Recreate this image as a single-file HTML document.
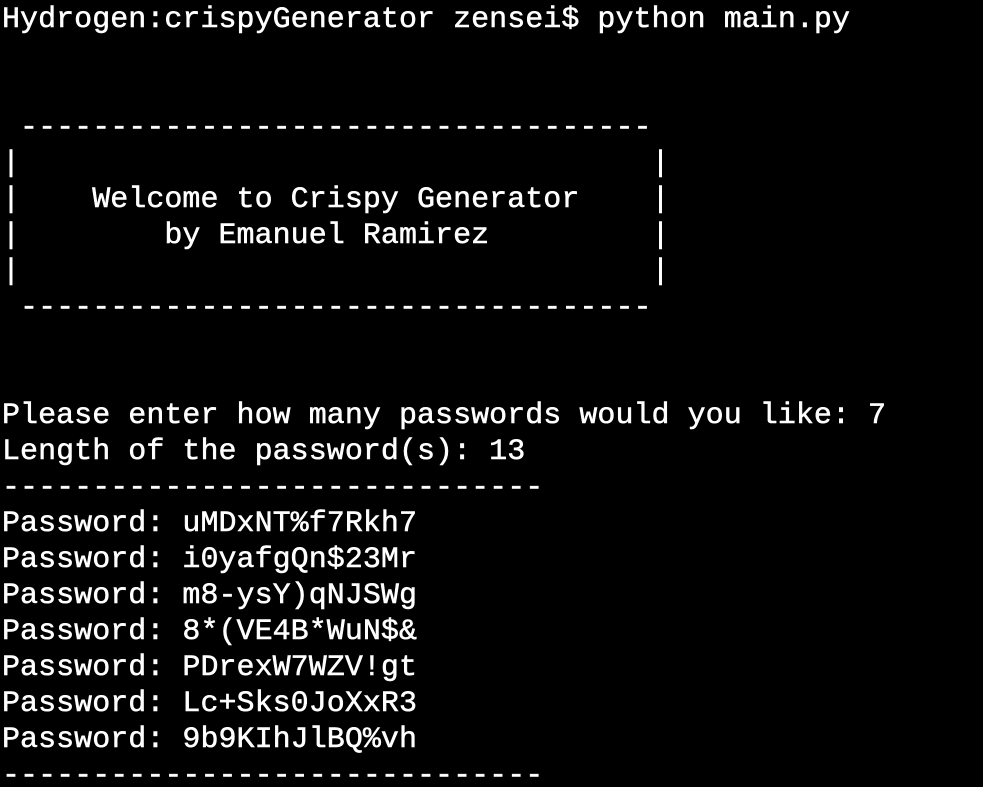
<!DOCTYPE html>
<html><head><meta charset="utf-8"><style>
html,body{margin:0;padding:0;background:#000;width:983px;height:787px;overflow:hidden}
pre{margin:0;padding:2px 0 0 2px;font-family:"Liberation Mono",monospace;font-size:30px;line-height:36px;color:#fff;letter-spacing:0.04px;-webkit-text-stroke:0.5px #fff}
</style></head><body><pre>Hydrogen:crispyGenerator zensei$ python main.py


 -----------------------------------
|                                   |
|    Welcome to Crispy Generator    |
|        by Emanuel Ramirez         |
|                                   |
 -----------------------------------


Please enter how many passwords would you like: 7
Length of the password(s): 13
------------------------------
Password: uMDxNT%f7Rkh7
Password: i0yafgQn$23Mr
Password: m8-ysY)qNJSWg
Password: 8*(VE4B*WuN$&amp;
Password: PDrexW7WZV!gt
Password: Lc+Sks0JoXxR3
Password: 9b9KIhJlBQ%vh
------------------------------</pre></body></html>
